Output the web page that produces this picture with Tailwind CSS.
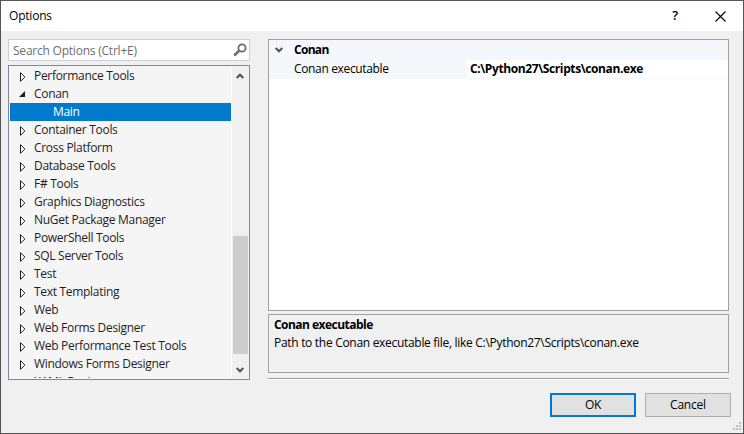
<!DOCTYPE html>
<html lang="en">
<head>
<meta charset="utf-8">
<title>Options</title>
<script src="https://cdn.jsdelivr.net/npm/@tailwindcss/browser@4"></script>
</head>
<body class="font-['Open_Sans','Noto_Sans',sans-serif] text-[12px] tracking-[-0.300px] text-black">
<svg class="hidden">
  <symbol id="closed" viewBox="0 0 6 10"><path d="M.5.700v8.600L4.900 5z" fill="#fff" stroke="#1e1e1e"/></symbol>
  <symbol id="up" viewBox="0 0 8 6"><path d="M.7 5L4 1.700 7.300 5" fill="none" stroke="#505050" stroke-width="2"/></symbol>
</svg>
<div class="flex h-[434px] w-[744px] flex-col overflow-hidden border border-[#555] bg-[#f0f0f0] whitespace-nowrap">
  <header class="flex h-[30px] shrink-0 items-center bg-white pl-2">
    <span class="grow tracking-[-0.200px]">Options</span>
    <span class="w-[12px] text-center text-[13px] font-semibold">?</span>
    <svg class="mr-[17px] ml-[34px] size-[11px]" viewBox="0 0 11 11"><path d="M.5.5l10 10M10.500.5l-10 10" stroke="#000" stroke-width="1.100"/></svg>
  </header>
  <main class="flex gap-[18px] pt-2 pl-[7px]">
    <section class="w-[242px]">
      <div class="flex h-[22px] items-center border border-[#ccceda] bg-white pt-px pr-[2px] pl-1 text-[#6d6d6d]">
        <span class="grow tracking-[-0.220px]">Search Options (Ctrl+E)</span>
        <svg class="-mt-px size-[14px]" viewBox="0 0 14 14" fill="none" stroke="#6a6a6a"><circle cx="9" cy="5" r="3.600" stroke-width="1.800"/><path d="M6.200 7.800L1.200 12.500" stroke-width="2.600"/></svg>
      </div>
      <div class="mt-1 flex h-[315px] border border-[#828790] bg-[#f5f5f5] p-px">
        <ul id="tree" class="h-[311px] w-[221px] overflow-hidden text-[#1e1e1e]"></ul>
        <div class="flex w-[17px] flex-col items-center border-l border-white bg-[#f0f0f0]">
          <svg class="mt-[6px] h-[6px] w-2"><use href="#up"/></svg>
          <div class="mt-[157px] h-[118px] w-[15px] bg-[#cdcdcd]"></div>
          <svg class="mt-[13px] h-[6px] w-2 rotate-180"><use href="#up"/></svg>
        </div>
      </div>
    </section>
    <section class="w-[461px]">
      <div class="h-[272px] border border-[#a0a0a0] bg-white">
        <div class="flex h-5 items-center bg-[#f4f7fc] font-bold">
          <svg class="mr-[11px] ml-[6px] h-[6px] w-2 rotate-180"><use href="#up"/></svg>
          <span class="tracking-[-0.700px]">Conan</span>
        </div>
        <div class="flex h-[19px] border-b border-[#f4f7fc] leading-[18px]">
          <span class="h-[19px] w-[198px] bg-[#f4f7fc] pl-[25px] tracking-[-0.350px]">Conan executable</span>
          <span class="pl-[3px] font-bold tracking-[-0.390px]">C:\Python27\Scripts\conan.exe</span>
        </div>
      </div>
      <div class="mt-[3px] h-[59px] border border-[#a0a0a0] pt-px pl-[5px] leading-[18px]">
        <p class="font-bold tracking-[-0.530px]">Conan executable</p>
        <p>Path to the Conan executable file, like C:\Python27\Scripts\conan.exe</p>
      </div>
      <div class="mt-[5px] h-[2px] border-t border-b border-t-[#a0a0a0] border-b-white"></div>
    </section>
  </main>
  <footer class="relative mt-[13px] flex justify-end gap-[9px] pr-3">
    <button class="h-6 w-[86px] border-2 border-[#0078d7] bg-[#e1e1e1] leading-5">OK</button>
    <button class="h-6 w-[86px] border border-[#adadad] bg-[#e1e1e1] leading-[22px] tracking-[-0.200px]">Cancel</button>
    <svg class="absolute top-[29px] right-[2px] size-2" viewBox="0 0 8 8" fill="#bfbfbf"><path d="M6 0h2v2H6zM3 3h2v2H3zM6 3h2v2H6zM0 6h2v2H0zM3 6h2v2H3zM6 6h2v2H6z"/></svg>
  </footer>
</div>
<script>
const items = ['Performance Tools', 'Conan', 'Main', 'Container Tools', 'Cross Platform', 'Database Tools', 'F# Tools',
  'Graphics Diagnostics', 'NuGet Package Manager', 'PowerShell Tools', 'SQL Server Tools', 'Test', 'Text Templating',
  'Web', 'Web Forms Designer', 'Web Performance Test Tools', 'Windows Forms Designer', 'XAML Designer'];
const closed = '<svg class="mt-px mr-[8px] ml-[10px] h-[10px] w-[6px]"><use href="#closed"/></svg>';
const open = '<svg class="mr-[9px] ml-[9px] size-[6px]" viewBox="0 0 6 6"><path d="M6 0v6H0z" fill="#1e1e1e"/></svg>';
document.getElementById('tree').innerHTML = items.map(t =>
  t === 'Main'
    ? `<li class="h-[18px] bg-[#007acc] pl-[43px] leading-[18px] text-white">${t}</li>`
    : `<li class="flex h-[18px] items-center leading-[18px]">${t === 'Conan' ? open : closed}<span>${t}</span></li>`
).join('');
</script>
</body>
</html>
